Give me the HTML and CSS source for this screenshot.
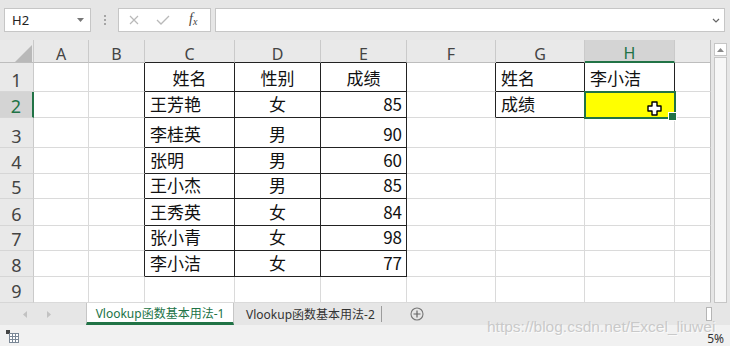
FILE: index.html
```html
<!DOCTYPE html>
<html lang="zh-CN">
<head>
<meta charset="utf-8">
<title>Vlookup函数基本用法-1</title>
<link rel="stylesheet" href="styles.css">
</head>
<body>
<div class="app">
  <div class="toolbar">
    <div class="namebox"><span>H2</span>
      <svg class="dd" width="7" height="4" viewBox="0 0 7 4"><polygon points="0,0 7,0 3.5,4" fill="#777"/></svg>
    </div>
    <div class="grip"><i></i><i></i><i></i></div>
    <div class="fxbox">
      <svg width="10" height="10" viewBox="0 0 10 10"><path d="M1 1 L9 9 M9 1 L1 9" stroke="#b9b9b9" stroke-width="1.2" fill="none"/></svg>
      <svg width="14" height="10" viewBox="0 0 14 10"><path d="M1 5 L5 9 L13 1" stroke="#b9b9b9" stroke-width="1.3" fill="none"/></svg>
      <span class="fx">f<sub>x</sub></span>
    </div>
    <div class="formula">
      <svg width="8" height="5" viewBox="0 0 8 5"><path d="M1 1 L4 4 L7 1" stroke="#666" stroke-width="1.2" fill="none"/></svg>
    </div>
  </div>

  <div class="main">
    <div class="sheet">
      <div class="ch corner"><svg width="17" height="17" viewBox="0 0 17 17"><polygon points="17,0 17,17 0,17" fill="#b9b9b9"/></svg></div>
      <div class="ch">A</div><div class="ch">B</div><div class="ch bb">C</div><div class="ch bb">D</div><div class="ch bb">E</div><div class="ch">F</div><div class="ch bb">G</div><div class="ch on">H</div><div class="ch last"></div>

      <div class="rh">1</div><div class="c"></div><div class="c br"></div><div class="c bd ctr">姓名</div><div class="c bd ctr">性别</div><div class="c bd ctr">成绩</div><div class="c br"></div><div class="c bd">姓名</div><div class="c bd">李小洁</div><div class="c last"></div>

      <div class="rh on">2</div><div class="c"></div><div class="c br"></div><div class="c bd">王芳艳</div><div class="c bd ctr">女</div><div class="c bd r">85</div><div class="c br"></div><div class="c bd">成绩</div><div class="c bd sel"><svg class="cursor" width="15" height="15" viewBox="0 0 15 15"><path d="M5 1 H10 V5 H14 V10 H10 V14 H5 V10 H1 V5 H5 Z" fill="#fff" stroke="#000" stroke-width="1.4" stroke-linejoin="round"/></svg></div><div class="c last"></div>

      <div class="rh">3</div><div class="c"></div><div class="c br"></div><div class="c bd">李桂英</div><div class="c bd ctr">男</div><div class="c bd r">90</div><div class="c"></div><div class="c"></div><div class="c"></div><div class="c last"></div>

      <div class="rh">4</div><div class="c"></div><div class="c br"></div><div class="c bd">张明</div><div class="c bd ctr">男</div><div class="c bd r">60</div><div class="c"></div><div class="c"></div><div class="c"></div><div class="c last"></div>

      <div class="rh">5</div><div class="c"></div><div class="c br"></div><div class="c bd">王小杰</div><div class="c bd ctr">男</div><div class="c bd r">85</div><div class="c"></div><div class="c"></div><div class="c"></div><div class="c last"></div>

      <div class="rh">6</div><div class="c"></div><div class="c br"></div><div class="c bd">王秀英</div><div class="c bd ctr">女</div><div class="c bd r">84</div><div class="c"></div><div class="c"></div><div class="c"></div><div class="c last"></div>

      <div class="rh">7</div><div class="c"></div><div class="c br"></div><div class="c bd">张小青</div><div class="c bd ctr">女</div><div class="c bd r">98</div><div class="c"></div><div class="c"></div><div class="c"></div><div class="c last"></div>

      <div class="rh">8</div><div class="c"></div><div class="c br"></div><div class="c bd">李小洁</div><div class="c bd ctr">女</div><div class="c bd r">77</div><div class="c"></div><div class="c"></div><div class="c"></div><div class="c last"></div>

      <div class="rh">9</div><div class="c"></div><div class="c"></div><div class="c"></div><div class="c"></div><div class="c"></div><div class="c"></div><div class="c"></div><div class="c"></div><div class="c last"></div>
    </div>
    <div class="vscroll">
      <div class="varrow"><svg width="7" height="4" viewBox="0 0 7 4"><polygon points="0,4 7,4 3.5,0" fill="#8a8a8a"/></svg></div>
      <div class="vtrack"></div>
    </div>
  </div>

  <div class="tabbar">
    <div class="nav">
      <svg width="4" height="7" viewBox="0 0 4 7"><polygon points="4,0 4,7 0,3.5" fill="#c2c2c2"/></svg>
      <svg width="4" height="7" viewBox="0 0 4 7"><polygon points="0,0 0,7 4,3.5" fill="#c2c2c2"/></svg>
    </div>
    <div class="tab active">Vlookup函数基本用法-1</div>
    <div class="tab">Vlookup函数基本用法-2</div>
    <div class="sep"></div>
    <svg class="add" width="14" height="14" viewBox="0 0 14 14"><circle cx="7" cy="7" r="6" fill="none" stroke="#777" stroke-width="1.1"/><path d="M7 3.5 V10.5 M3.5 7 H10.5" stroke="#666" stroke-width="1.2"/></svg>
    <div class="hthumb"></div>
  </div>

  <div class="status">
    <svg width="13" height="13" viewBox="0 0 13 13">
      <rect x="0" y="0" width="4" height="4" fill="#444"/>
      <rect x="3.5" y="3.5" width="9" height="9" fill="#fff" stroke="#7a8796" stroke-width="1"/>
      <path d="M3.5 6.5 H12.5 M3.5 9.5 H12.5 M6.5 3.5 V12.5 M9.5 3.5 V12.5" stroke="#7a8796" stroke-width="1"/>
    </svg>
    <span class="zoom">5%</span>
  </div>

  <div class="watermark">https://blog.csdn.net/Excel_liuwei</div>
</div>
</body>
</html>
```

FILE: styles.css
```css
* { box-sizing: border-box; }
html, body { margin: 0; padding: 0; }
body {
  width: 730px;
  height: 346px;
  overflow: hidden;
  background: #e6e6e6;
  font-family: "Noto Sans", "Noto Sans CJK SC", sans-serif;
}
.app {
  position: relative;
  width: 730px;
  height: 346px;
  display: flex;
  flex-direction: column;
}

/* toolbar */
.toolbar {
  height: 40px;
  flex: none;
  display: flex;
  align-items: flex-start;
  padding: 8px 5px 0 4px;
  background: #e6e6e6;
}
.namebox {
  width: 87px;
  height: 24px;
  background: #fff;
  border: 1px solid #c6c6c6;
  display: flex;
  align-items: center;
  justify-content: space-between;
  padding: 0 6px 0 7px;
  font-size: 13px;
  color: #222;
}
.grip {
  width: 27px;
  height: 24px;
  display: flex;
  flex-direction: column;
  align-items: center;
  justify-content: center;
  gap: 2px;
}
.grip i {
  display: block;
  width: 2px;
  height: 2px;
  background: #a5a5a5;
}
.fxbox {
  width: 93px;
  height: 24px;
  margin-right: 4px;
  background: #fff;
  border: 1px solid #c6c6c6;
  display: flex;
  align-items: center;
  padding-left: 10px;
  gap: 17px;
}
.fx {
  font-family: "Liberation Serif", serif;
  font-style: italic;
  font-size: 14px;
  color: #444;
  margin-left: 2px;
  line-height: 14px;
}
.fx sub { font-size: 10px; vertical-align: -2px; }
.formula {
  flex: 1;
  height: 24px;
  background: #fff;
  border: 1px solid #c6c6c6;
  display: flex;
  align-items: center;
  justify-content: flex-end;
  padding-right: 4px;
}

/* sheet */
.main {
  height: 263px;
  flex: none;
  display: flex;
}
.sheet {
  width: 711px;
  height: 263px;
  overflow: hidden;
  background: #fff;
  display: grid;
  grid-template-columns: 34px 55px 56px 90px 86px 86px 89px 89px 90px 36px;
  grid-template-rows: 23px 29px 26px 30px 26px 25px 27px 25px 26px 26px;
}
.ch {
  background: #e9e9e9;
  border-right: 1px solid #cacaca;
  border-bottom: 1px solid #bdbdbd;
  display: flex;
  justify-content: center;
  align-items: flex-end;
  font-size: 16px;
  line-height: 16px;
  color: #444;
}
.ch.corner { justify-content: flex-end; padding: 0 1px 0 0; }
.ch.on {
  background: #d4d4d4;
  color: #217346;
  border-bottom: 2px solid #217346;
}
.ch.bb { border-bottom-color: #222; }
.ch.last { border-right-color: #bdbdbd; }
.rh {
  background: #e9e9e9;
  border-right: 1px solid #cacaca;
  border-bottom: 1px solid #d6d6d6;
  display: flex;
  justify-content: center;
  align-items: flex-end;
  padding-bottom: 2px;
  font-size: 18px;
  line-height: 18px;
  color: #444;
}
.rh.on {
  background: #d4d4d4;
  color: #217346;
  border-right: 2px solid #217346;
}
.c {
  border-right: 1px solid #dadada;
  border-bottom: 1px solid #dadada;
  display: flex;
  align-items: flex-end;
  padding: 0 4px 5px 5px;
  font-family: "Noto Sans CJK SC", sans-serif;
  font-size: 17px;
  line-height: 17px;
  color: #111;
  white-space: nowrap;
}
.c.ctr { justify-content: center; padding-left: 4px; }
.c.r { justify-content: flex-end; }
.c.bd { border-right-color: #222; border-bottom-color: #222; }
.c.br { border-right-color: #222; }
.c.last { border-right-color: #bdbdbd; }
.c.sel {
  position: relative;
  z-index: 1;
  background: #ffff00;
  outline: 2px solid #217346;
  outline-offset: -1px;
}
.c.sel::after {
  content: "";
  position: absolute;
  right: -3px;
  bottom: -4px;
  width: 7px;
  height: 7px;
  background: #217346;
  border: 1px solid #fff;
}
.cursor {
  position: absolute;
  left: 62px;
  top: 9px;
}

.vscroll {
  width: 19px;
  height: 263px;
  padding: 3px 3px 0 3px;
  display: flex;
  flex-direction: column;
  gap: 1px;
  background: #e6e6e6;
}
.varrow {
  height: 13px;
  background: #fff;
  border: 1px solid #c6c6c6;
  display: flex;
  align-items: center;
  justify-content: center;
}
.vtrack {
  flex: 1;
  background: #f7f7f7;
  border: 1px solid #c6c6c6;
}

/* tabs */
.tabbar {
  height: 22px;
  flex: none;
  display: flex;
  align-items: stretch;
  background: #e6e6e6;
}
.nav {
  width: 86px;
  display: flex;
  align-items: center;
  padding-left: 23px;
  gap: 20px;
}
.tab {
  width: 147px;
  display: flex;
  align-items: center;
  padding-left: 12px;
  font-size: 12px;
  color: #333;
  white-space: nowrap;
}
.tab.active {
  width: 148px;
  justify-content: center;
  padding: 0;
  background: #fff;
  color: #217346;
  border-left: 1px solid #c6c6c6;
  border-right: 1px solid #c6c6c6;
  border-bottom: 3px solid #217346;
}
.sep {
  width: 1px;
  height: 16px;
  align-self: center;
  background: #9c9c9c;
}
.add {
  align-self: center;
  margin-left: 28px;
}
.hthumb {
  margin-left: auto;
  margin-right: 18px;
  width: 6px;
  height: 14px;
  align-self: center;
  background: #fff;
  border: 1px solid #b5b5b5;
}

/* status */
.status {
  height: 21px;
  flex: none;
  display: flex;
  align-items: center;
  justify-content: space-between;
  padding: 1px 6px 0 6px;
  background: #f1f1f1;
}
.zoom {
  font-size: 12px;
  line-height: 12px;
  color: #333;
  padding-top: 6px;
}

.watermark {
  position: absolute;
  left: 487px;
  top: 320px;
  font-family: "Liberation Sans", sans-serif;
  font-size: 15.5px;
  line-height: 13px;
  color: #c9c9c9;
  text-shadow: 1px 1px 0 rgba(255, 255, 255, 0.7);
  white-space: nowrap;
}
```
